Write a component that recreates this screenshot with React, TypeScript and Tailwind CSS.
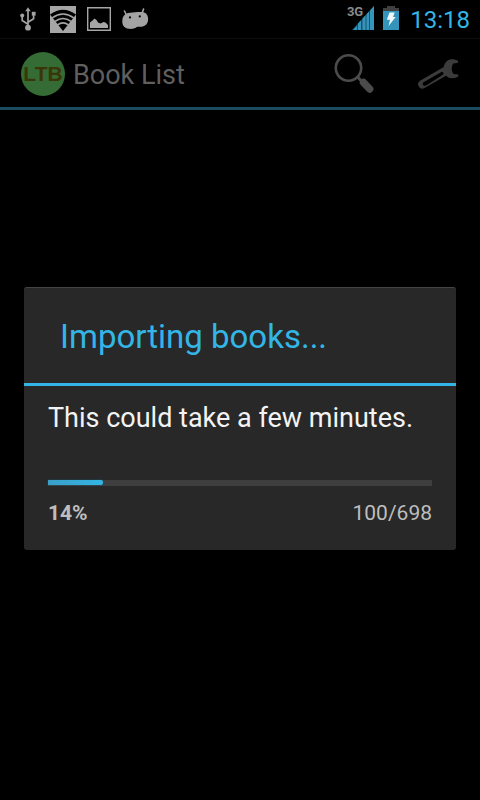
import React from "react";

const done = 100;
const total = 698;
const percent = Math.floor((done / total) * 100);

function UsbIcon() {
  return (
    <svg width="18" height="24" viewBox="0 0 18 24" fill="none" stroke="#a3a3a3" strokeWidth="1.7" aria-hidden="true">
      <path d="M9 4v16M9 17.200L3.200 13.500V9M9 15.200l5.600-3.500V8" />
      <path d="M9 .3l2.700 4H6.300z" fill="#a3a3a3" stroke="none" />
      <circle cx="9" cy="20.700" r="2.900" fill="#a3a3a3" stroke="none" />
      <circle cx="3.200" cy="8.500" r="2" fill="#a3a3a3" stroke="none" />
      <path d="M12.800 4.800h3.800v3.800h-3.800z" fill="#a3a3a3" stroke="none" />
    </svg>
  );
}

function WifiIcon() {
  return (
    <svg width="26" height="27" viewBox="0 0 26 27" aria-hidden="true">
      <path d="M0 0h26v27H0z" fill="#a6a6a6" />
      <path d="M0 8.500Q13-1 26 8.500L13 25z" fill="#000" />
      <path d="M2.200 11.800Q13 4.200 23.800 11.800M5 15.400Q13 9.600 21 15.400M7.600 18.800Q13 15 18.400 18.800" fill="none" stroke="#a6a6a6" strokeWidth="1.600" />
    </svg>
  );
}

function GalleryIcon() {
  return (
    <svg width="24" height="24" viewBox="0 0 24 24" aria-hidden="true">
      <path d="M.7.700h22.600v22.600H.7z" fill="none" stroke="#a6a6a6" strokeWidth="1.400" />
      <path d="M3 21v-5.500l2.500-2 2-2 2 1.500 1.500 2.500 2.500 1 3-1.500 2 .5L21 18v3z" fill="#a6a6a6" />
    </svg>
  );
}

function DroidIcon() {
  return (
    <svg width="28" height="22" viewBox="0 0 28 22" aria-hidden="true">
      <path d="M4.500 7L2.500 3M20 5.500l1.500-4.500" stroke="#a3a3a3" strokeWidth="1.600" strokeLinecap="round" />
      <path d="M.3 13.500C.3 8 3 5.300 8 4.800 12 4.400 18 3.600 21.500 4.200 25 5 26.500 8.500 26 12.500c-.5 4-3.500 6.500-8 6.300-1.500 0-2.500-.2-3.500.4-2 1.500-5 2-7.800 1.600C2.500 20.200.3 17.500.3 13.500z" fill="#a3a3a3" />
      <circle cx="8" cy="9.400" r="1.100" fill="#000" />
      <circle cx="17.800" cy="8.400" r="1.100" fill="#000" />
    </svg>
  );
}

function SignalIcon() {
  return (
    <svg width="22" height="24" viewBox="0 0 22 24" aria-hidden="true">
      <path d="M0 24L22 0v24z" fill="#17536b" />
      <path d="M1 24l4-4.300V24zM6 24v-6.500l3-3.300V24zM10.500 24V12.500l3-3.200V24zM14.500 24V8.200l2.500-2.800V24zM18 24V4.400L22 0v24z" fill="#3494bb" />
    </svg>
  );
}

function BatteryIcon() {
  return (
    <svg width="16" height="24" viewBox="0 0 16 24" aria-hidden="true">
      <path d="M4 0h8v2h4v5H0V2h4z" fill="#404040" />
      <path d="M0 5h16v19H0z" fill="#3494bb" />
      <path d="M6.500 6.500h5.200L10 11h2.700L5.500 20l1.500-6.300H3.800z" fill="#f0f8fb" />
    </svg>
  );
}

function SearchIcon() {
  return (
    <svg width="40" height="40" viewBox="0 0 40 40" aria-hidden="true">
      <circle cx="14.500" cy="14" r="12.700" fill="none" stroke="#4b4b4b" strokeWidth="2.600" />
      <path d="M23 22.500l5 5" stroke="#4b4b4b" strokeWidth="3" />
      <path d="M29.500 28.500l6.200 6.500" stroke="#4b4b4b" strokeWidth="7.400" strokeLinecap="round" />
    </svg>
  );
}

function WrenchIcon() {
  return (
    <svg width="42" height="32" viewBox="0 0 42 32" aria-hidden="true">
      <path d="M41 2.800C37.500.6 32.500.6 29.800 3.200 28 4.800 27 6.800 26.800 9L3.500 22.500C1 24 .4 26 1.600 28.300s3.400 3 5.900 1.700L29 17.800c3 3 8 3.400 12.200.8v-2l-4.500-.6c-2.500-2.200-2.500-8-.3-10.500l4.600-.7z" fill="#3b3b3b" />
      <path d="M6.500 24.200L24 14.200c2.200-1.200 3.400 1.700 1.500 2.800L9.500 27.300c-3 1.700-5-1.500-3-3.100z" fill="#000" />
    </svg>
  );
}

function StatusBar() {
  return (
    <div className="flex h-[38px] items-center justify-between pr-2.5 pl-[19px]">
      <div className="flex items-center gap-[11px]">
        <UsbIcon />
        <div className="pl-0.5"><WifiIcon /></div>
        <GalleryIcon />
        <DroidIcon />
      </div>
      <div className="flex h-full items-start pt-1.5">
        <span className="-mr-[11px] text-[13px] leading-3 font-bold text-[#8a8a8a]">3G</span>
        <SignalIcon />
        <div className="mr-[11px] ml-[9px]"><BatteryIcon /></div>
        <time className="text-2xl leading-7 text-[#33b5e5]">13:18</time>
      </div>
    </div>
  );
}

function ActionBar() {
  return (
    <header className="flex h-[72px] items-center justify-between border-t border-b-3 border-t-[#0c0c0c] border-b-[#1b4c5e] px-[21px] pt-0.5">
      <div className="flex items-center gap-2">
        <div className="flex size-11 items-center justify-center rounded-full bg-[#356c35] font-['Liberation_Sans',sans-serif] text-[21px] font-bold text-[#3a3607]">
          LTB
        </div>
        <h1 className="pt-0.5 text-[27px] leading-8 text-[#5f5f5f]">Book List</h1>
      </div>
      <div className="flex items-center gap-[43px]">
        <button type="button" aria-label="Search"><SearchIcon /></button>
        <button type="button" aria-label="Settings"><WrenchIcon /></button>
      </div>
    </header>
  );
}

function ImportDialog() {
  return (
    <div role="dialog" aria-modal="true" aria-labelledby="import-title" className="w-full rounded-[3px] border-t border-[#444444] bg-[#282828]">
      <h2 id="import-title" className="border-b-3 border-[#33b5e5] px-9 pt-7 pb-[25px] text-[33px] leading-[42px] text-[#33b5e5]">
        Importing books...
      </h2>
      <div className="px-6 pt-3 pb-[21px]">
        <p className="text-[27px] leading-10 text-[#f3f3f3]">This could take a few minutes.</p>
        <div
          role="progressbar"
          aria-label="Import progress"
          aria-valuenow={done}
          aria-valuemin={0}
          aria-valuemax={total}
          className="mt-[42px] h-1.5 bg-[#3e3e3e]"
        >
          <div
            className="h-[5px] rounded-r-xs bg-linear-to-r from-[#399fc8] to-[#33b5e5] shadow-[0_0_2px_#1d5f78]"
            style={{ width: `${(done / total) * 100}%` }}
          />
        </div>
        <div className="mt-[11px] flex justify-between text-[21px] leading-8 text-[#bebebe]">
          <span className="font-bold">{percent}%</span>
          <span>{done}/{total}</span>
        </div>
      </div>
    </div>
  );
}

export default function App() {
  return (
    <div className="flex min-h-screen flex-col bg-black font-[Roboto,sans-serif]">
      <StatusBar />
      <main className="relative flex-1">
        <ActionBar />
        <div className="absolute inset-0 flex items-center px-6 pb-px">
          <ImportDialog />
        </div>
      </main>
    </div>
  );
}
